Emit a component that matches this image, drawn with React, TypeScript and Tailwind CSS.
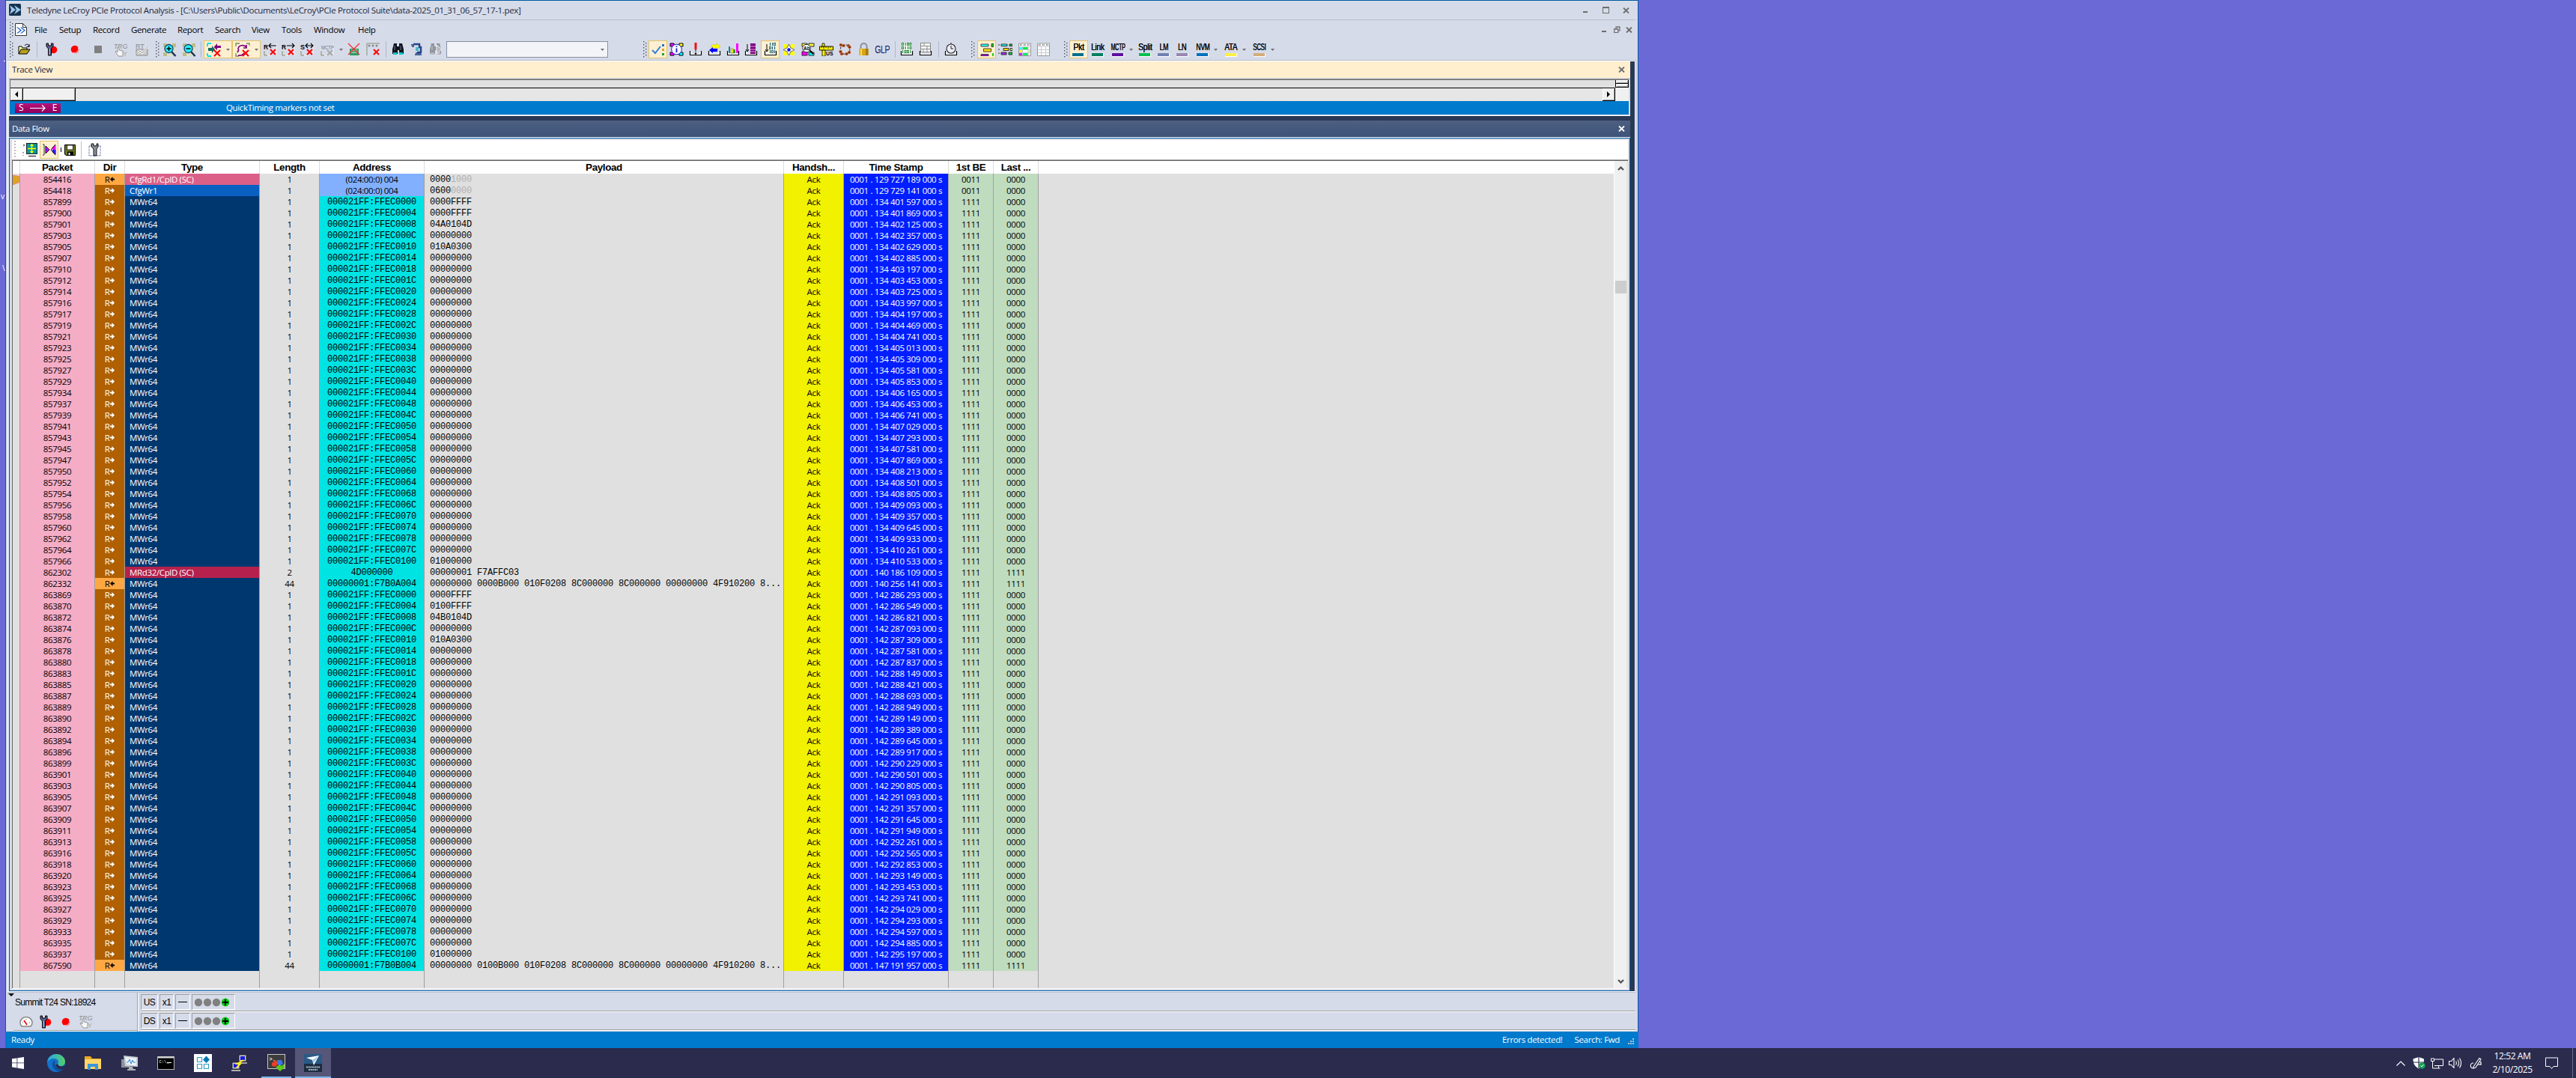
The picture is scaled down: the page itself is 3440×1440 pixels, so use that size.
import React from "react";

/* ---------- data ---------- */

type Row = {
  packet: string;
  back?: boolean;
  type: string;
  typeClass: string;
  length: string;
  address: string;
  payload: string;
  dim?: string;
  time: string;
  first: string;
  last: string;
  cfg?: boolean;
};

const NAVY = "bg-[#00376f]";

const packetsA =
  "899 900 901 903 905 907 910 912 914 916 917 919 921 923 925 927 929 934 937 939 941 943 945 947 950 952 954 956 958 960 962 964 966".split(" ");
const packetsB =
  "869 870 872 874 876 878 880 883 885 887 889 890 892 894 896 899 901 903 905 907 909 911 913 916 918 920 923 925 927 929 933 935 937".split(" ");
const timesA =
  "401 597,401 869,402 125,402 357,402 629,402 885,403 197,403 453,403 725,403 997,404 197,404 469,404 741,405 013,405 309,405 581,405 853,406 165,406 453,406 741,407 029,407 293,407 581,407 869,408 213,408 501,408 805,409 093,409 357,409 645,409 933,410 261,410 533".split(",");
const timesB =
  "286 293,286 549,286 821,287 093,287 309,287 581,287 837,288 149,288 421,288 693,288 949,289 149,289 389,289 645,289 917,290 229,290 501,290 805,291 093,291 357,291 645,291 949,292 261,292 565,292 853,293 149,293 453,293 741,294 029,294 293,294 597,294 885,295 197".split(",");

function block(prefix: string, packets: string[], second: string, times: string[], head: string[]): Row[] {
  return packets.map((p, i) => ({
    packet: prefix + p,
    type: "MWr64",
    typeClass: NAVY,
    length: "1",
    address: "000021FF:FFEC" + (i === 32 ? "0100" : (i * 4).toString(16).toUpperCase().padStart(4, "0")),
    payload: i < head.length ? head[i] : i === 32 ? "01000000" : "00000000",
    time: `0001 . ${second} ${times[i]} 000 s`,
    first: "1111",
    last: "0000",
  }));
}

const rows: Row[] = [
  { packet: "854416", back: true, type: "CfgRd1/CplD (SC)", typeClass: "bg-[#db6088]", length: "1", address: "(024:00:0) 004", payload: "0000", dim: "1000", time: "0001 . 129 727 189 000 s", first: "0011", last: "0000", cfg: true },
  { packet: "854418", type: "CfgWr1", typeClass: "bg-[#0860c0]", length: "1", address: "(024:00:0) 004", payload: "0600", dim: "0000", time: "0001 . 129 729 141 000 s", first: "0011", last: "0000", cfg: true },
  ...block("857", packetsA, "134", timesA, ["0000FFFF", "0000FFFF", "04A0104D", "00000000", "010A0300"]),
  { packet: "862302", type: "MRd32/CplD (SC)", typeClass: "bg-[#b5214c]", length: "2", address: "4D000000", payload: "00000001 F7AFFC03", time: "0001 . 140 186 109 000 s", first: "1111", last: "1111" },
  { packet: "862332", back: true, type: "MWr64", typeClass: NAVY, length: "44", address: "00000001:F7B0A004", payload: "00000000 0000B000 010F0208 8C000000 8C000000 00000000 4F910200 8...", time: "0001 . 140 256 141 000 s", first: "1111", last: "1111" },
  ...block("863", packetsB, "142", timesB, ["0000FFFF", "0100FFFF", "04B0104D", "00000000", "010A0300"]),
  { packet: "867590", back: true, type: "MWr64", typeClass: NAVY, length: "44", address: "00000001:F7B0B004", payload: "00000000 0100B000 010F0208 8C000000 8C000000 00000000 4F910200 8...", time: "0001 . 147 191 957 000 s", first: "1111", last: "1111" },
];

const GRID = "grid grid-cols-[10px_100px_40px_180px_80px_140px_480px_80px_140px_60px_60px_1fr]";

/* ---------- small drawing helpers ---------- */

const Svg = ({ w, h, c = "", children }: { w: number; h: number; c?: string; children: React.ReactNode }) => (
  <svg width={w} height={h} viewBox={`0 0 ${w} ${h}`} className={`shrink-0 block tracking-normal ${c}`}>{children}</svg>
);

const Grip = ({ c = "" }) => (
  <Svg w={5} h={22} c={c}>
    {Array.from({ length: 11 }, (_, i) => (
      <rect key={i} x={i % 2 ? 3 : 0} y={i * 2} width="1.4" height="1.4" fill="#4c5066" />
    ))}
  </Svg>
);
const Sep = ({ c = "" }) => <div className={`h-[22px] w-px shrink-0 bg-[#b3b7c8] ${c}`} />;
const Drop = ({ c = "" }) => (
  <Svg w={5} h={3} c={c}><path d="M0 0h5L2.500 3z" fill="#717171" /></Svg>
);
const Hot = ({ c = "", children }: { c?: string; children: React.ReactNode }) => (
  <div className={`flex h-[24px] shrink-0 items-center justify-center border border-[#e5c365] bg-[#fdf0d2] ${c}`}>{children}</div>
);
const RedX = ({ x, y, s = 7 }: { x: number; y: number; s?: number }) => (
  <path d={`M${x} ${y}l${s} ${s}m0 -${s}l-${s} ${s}`} stroke="#f00" strokeWidth="2" fill="none" />
);

const Wrench = ({ c = "" }) => (
  <Svg w={16} h={18} c={c}>
    <circle cx="10.500" cy="9.500" r="4.800" fill="#f00" />
    <path d="M1 1v4l2.500 3v9h4V8L10 5V1H7.500v3h-4V1z" fill="#5c6494" stroke="#000" strokeWidth="1" />
    <path d="M5 8v8" stroke="#c4cae4" />
  </Svg>
);
const RecordDot = ({ c = "" }) => (
  <Svg w={12} h={12} c={c}><circle cx="6" cy="6" r="5.300" fill="#f00" /><path d="M10.500 3.500a5.500 5.500 0 0 1-7 7" stroke="#fff" fill="none" opacity=".8" /></Svg>
);
const TrgHand = ({ c = "" }) => (
  <Svg w={19} h={19} c={c}>
    <text x="0" y="8" fontSize="9" fontFamily="Liberation Sans" fontStyle="italic" fill="#8c8c8c" textLength="18.500" lengthAdjust="spacingAndGlyphs">TRG</text>
    <text x="12" y="18" fontSize="9" fontFamily="Liberation Sans" fill="#a8a8a8">Y</text>
    <path d="M5 6v7l-2-2-1 1 4 6h6v-7l-5-1V6z" fill="#f6f6f6" stroke="#8c8c8c" strokeWidth=".9" />
  </Svg>
);
const Zoomer = ({ plus, c = "" }: { plus?: boolean; c?: string }) => (
  <Svg w={19} h={19} c={c}>
    <path d="M1 1h17v17H1z" fill="#dbe0c8" />
    <path d="M1 1h5v5H1zM13 1h5v5h-5zM1 13h5v5H1z" fill="#b9be8a" />
    <path d="M12 12l5.500 6" stroke="#1c2f60" strokeWidth="2.500" />
    <circle cx="8.500" cy="8" r="5.500" fill="#28f0f4" stroke="#123a7a" strokeWidth="1.300" />
    <path d={plus ? "M5.500 8h6M8.500 5v6" : "M5.500 8h6"} stroke="#000" strokeWidth="1.400" />
  </Svg>
);
const Letters = ({ t, arrow, gray, c = "" }: { t: string; arrow: string; gray?: boolean; c?: string }) => (
  <Svg w={20} h={18} c={c}>
    <path d="M1 9v8h9M17 1v16" stroke="#f3f4ea" fill="none" />
    <path d="M1 11v6h4" stroke="#7d8264" fill="none" />
    {gray ? (
      <text x="1" y="9" fontSize="8" fontFamily="Liberation Sans" fill="#777" textLength="17" lengthAdjust="spacingAndGlyphs">{t}</text>
    ) : (
      <text x="0" y="9" fontSize="9.500" fontWeight="700" fontFamily="Liberation Sans" textLength="6" lengthAdjust="spacingAndGlyphs">{t}</text>
    )}
    {arrow && <path d={arrow} stroke="#000" fill="none" strokeWidth="1.200" />}
    {gray ? <path d="M9 10l7 7m0-7l-7 7" stroke="#a9a9a9" strokeWidth="2" /> : <RedX x={9} y={9} />}
  </Svg>
);
const Binoc = ({ gray, c = "" }: { gray?: boolean; c?: string }) => (
  <Svg w={18} h={18} c={c}>
    <path d="M3 1h4v4h3V1h4l2 8v6h-6v-5H8v5H1V9z" fill={gray ? "#8f949e" : "#10131c"} />
    <path d="M2 13h5v3H2zM10 13h5v3h-5z" fill={gray ? "#b6bac2" : "#00c8c8"} />
    <path d="M4 4v6M12 4v6" stroke={gray ? "#c4c8d0" : "#6e7690"} />
    {gray && <path d="M10 3l7 6-7 6z" fill="#b5b8bf" stroke="#f5f5f5" />}
  </Svg>
);
const Tray = ({ c = "", children }: { c?: string; children: React.ReactNode }) => (
  <Svg w={18} h={18} c={c}>
    <path d="M1 12h3v3h10v-3h3v5H1z" fill="#fff" />
    <path d="M1.500 11v5.500h15V11" fill="none" stroke="#000" strokeWidth="1.200" />
    {children}
  </Svg>
);

const Label = ({ t, bar, scale, c = "" }: { t: string; bar: string; scale: string; c?: string }) => (
  <div className={`flex h-[22px] shrink-0 flex-col items-center ${c}`}>
    <div className={`flex h-[16px] items-center justify-center whitespace-nowrap font-['Liberation_Sans'] text-[12.500px] leading-[14px] text-black [text-shadow:0.300px_0_0_#000] ${scale}`}>{t}</div>
    <div className={`h-[5px] w-[16px] border-b border-r border-white ${bar}`} />
  </div>
);

const Close = ({ color = "#6d6d6d", c = "" }) => (
  <Svg w={9} h={8} c={c}><path d="M1 .5l7 7M8 .5l-7 7" stroke={color} strokeWidth="1.800" /></Svg>
);

const Bits = ({ x, y, s, color, rowsText }: { x: number; y: number; s: number; color: string; rowsText: string[] }) => (
  <g>
    {rowsText.map((r, j) =>
      r.split("").map((b, i) =>
        b === "1" ? (
          <rect key={`${i}-${j}`} x={x + i * s + 1} y={y + j * 5} width="1.100" height="4" fill={color} />
        ) : (
          <rect key={`${i}-${j}`} x={x + i * s + 0.5} y={y + j * 5 + 0.5} width="2" height="3" fill="none" stroke={color} strokeWidth=".9" />
        )
      )
    )}
  </g>
);

/* ---------- toolbars ---------- */

const MainToolbar = () => (
  <div className="flex h-[28px] shrink-0 items-center">
    <Grip c="ml-[5px]" />
    <Svg w={17} h={16} c="ml-[6px]">
      <path d="M1 14V4h4l1 2h6v3" fill="#ffff9a" stroke="#000" />
      <path d="M1 14l3-6h12l-4 6z" fill="#b9a11c" stroke="#000" />
      <path d="M9 3c2-3 5-2 6 1M15 1v3.500h-3.500" stroke="#000" fill="none" />
    </Svg>
    <Sep c="ml-[8px]" />
    <Wrench c="ml-[11px]" />
    <RecordDot c="ml-[17px]" />
    <div className="ml-[20px] size-[10px] shrink-0 bg-[#808080]" />
    <TrgHand c="ml-[16px]" />
    <Svg w={18} h={18} c="ml-[10px]">
      <text x="0" y="8" fontSize="9" fontFamily="Liberation Sans" fill="#8a8a8a">RT</text>
      <path d="M1 9h15v8H1z" fill="#c9c9c9" stroke="#8d8d8d" />
      <path d="M2 15l4-4 3 3 8-10" stroke="#fff" strokeWidth="2.400" fill="none" />
      <path d="M2 15l4-4 3 3 8-10" stroke="#8d8d8d" fill="none" />
    </Svg>
    <Grip c="ml-[9px]" />
    <Zoomer plus c="ml-[4px]" />
    <Zoomer c="ml-[7px]" />
    <Sep c="ml-[6px]" />
    <Hot c="ml-[3px] w-[38px] gap-[6px] pl-px">
      <Svg w={20} h={19}>
        <path d="M1 1h5M1 1v4M1 18v-4M1 18h5" stroke="#00e5e5" strokeWidth="2" fill="none" />
        <path d="M2 7h5V4l4 5-4 5v-3H2z" fill="#0c6a62" />
        <path d="M19 4h-5V1L9.500 6l4.500 4V7h5z" fill="#800080" />
        <RedX x={10} y={10} s={8} />
      </Svg>
      <Drop />
    </Hot>
    <Hot c="w-[38px] gap-[6px] pl-px">
      <Svg w={20} h={19}>
        <path d="M1 5V1h5M15 1h4v3M1 14v4h4" stroke="#7d8264" strokeWidth="1.300" fill="none" />
        <path d="M4 9c0-6 8-7 11-3M15 3v4h-4M5 9l-2 4M4 17c5 1 8-3 8-3" stroke="#800080" strokeWidth="1.700" fill="none" />
        <RedX x={10} y={10} s={8} />
      </Svg>
      <Drop />
    </Hot>
    <Letters t="R" arrow="M7 4h10M10 1L7 4l3 3" c="ml-[4px]" />
    <Letters t="R" arrow="M7 4h10M14 1l3 3-3 3" c="ml-[4px]" />
    <Letters t="S" arrow="M7 4h10M10 1L7 4l3 3M14 1l3 3-3 3" c="ml-[5px]" />
    <Letters t="MCTP" arrow="" gray c="ml-[7px]" />
    <Drop c="ml-[5px]" />
    <Svg w={17} h={18} c="ml-[6px]">
      <path d="M3 8h12v9H3z" fill="#2d9c66" />
      <path d="M5 10h8M5 13h8" stroke="#d7efe0" />
      <path d="M1 1l15 15M16 1L1 16" stroke="#e33" strokeWidth="1.400" />
    </Svg>
    <Svg w={19} h={18} c="ml-[8px]">
      <path d="M1 17V1h17" stroke="#8b9074" fill="none" />
      <circle cx="4" cy="4" r="1.500" fill="#888" /><circle cx="9" cy="4" r="1.500" fill="#888" /><circle cx="14" cy="4" r="1.500" fill="#888" />
      <RedX x={10} y={9} />
    </Svg>
    <Sep c="ml-[7px]" />
    <Binoc c="ml-[7px]" />
    <Svg w={15} h={18} c="ml-[8px]">
      <path d="M3 2h8v4h2v7H8" stroke="#26458c" strokeWidth="2.500" fill="none" />
      <path d="M6 6h4v5H6z" fill="#4fb8c8" />
      <path d="M0 3h4M1 5h3M6 14h7M5 16h9" stroke="#1d3c80" strokeWidth="1.500" />
    </Svg>
    <Binoc gray c="ml-[9px]" />
    <div className="ml-[5px] flex h-[22px] w-[216px] shrink-0 items-center justify-end border border-[#8591a2] bg-[#f2f4f8] pr-[4px]">
      <Drop />
    </div>
    <Grip c="ml-[47px]" />
    <Hot c="ml-[2px] w-[25px]">
      <Svg w={18} h={18}>
        <path d="M1 10l4 4 7-9" stroke="#2f7ed8" strokeWidth="2" fill="none" />
        <path d="M14 2h3v3h-3z" fill="#2f6fc0" /><path d="M14 8h3v3h-3z" fill="#e39a1f" /><path d="M14 14h3v3h-3z" fill="#2b9a3a" />
      </Svg>
    </Hot>
    <Svg w={19} h={18} c="ml-[3px]">
      <path d="M1 1h5v4H1z" fill="#f0f" stroke="#000" /><path d="M13 1h5v4h-5z" fill="#ff0" stroke="#000" />
      <path d="M1 13h5v4H1z" fill="#f0f" stroke="#000" /><path d="M13 13h5v4h-5z" fill="#0ff" stroke="#000" />
      <circle cx="9.500" cy="9" r="6.800" fill="#fff" stroke="#1616c8" />
      <path d="M9.500 7.500V13M9.500 4.500v1.500" stroke="#1616c8" strokeWidth="1.800" />
    </Svg>
    <Tray c="ml-[7px]"><path d="M9 0v9" stroke="#e11" strokeWidth="3" /><path d="M9 9v3" stroke="#777" strokeWidth="2" /><circle cx="9" cy="14.500" r="1.200" /></Tray>
    <Tray c="ml-[7px]">
      <path d="M17 5L12 1v2H5v4h7v2z" fill="#ff0" stroke="#b8b800" strokeWidth=".5" />
      <path d="M2 10l5-4v2h6v4H7v2z" fill="#00f" />
    </Tray>
    <Tray c="ml-[7px]">
      <path d="M3 5h2v9H3z" fill="#0a8c8c" /><path d="M6 8h3v6H6z" fill="#ff0" stroke="#555" strokeWidth=".5" /><path d="M9.500 9h2v5h-2z" fill="#008000" /><path d="M13 1h3v13h-3z" fill="#f0f" />
    </Tray>
    <Tray c="ml-[6px]">
      <path d="M4 2v10M2 9l2 3 2-3" stroke="#000" fill="none" /><path d="M8 1h7v14H8z" fill="#800080" /><path d="M8 5h7M8 9h7M8 12h7" stroke="#d9a8d9" />
    </Tray>
    <Hot c="ml-[4px] w-[25px]">
      <Tray><path d="M4 2v10M2 9l2 3 2-3" stroke="#000" fill="none" /><Bits x={7} y={0} s={3} color="#106080" rowsText={["110", "011", "101"]} /></Tray>
    </Hot>
    <Svg w={17} h={17} c="ml-[4px]">
      <path d="M1 1h4l3.500 4L12 1h4v4l-3 3.500 3 3.500v4h-4l-3.500-3L5 16H1v-4l3-3.500L1 5z" fill="#ff0" />
      <path d="M8.500 1l2.500 5 5 2.500-5 2.500-2.500 5-2.500-5-5-2.500L6 6z" fill="#fff" stroke="#555" strokeWidth=".9" />
      <circle cx="8.500" cy="8.500" r="2.200" fill="#00f" />
    </Svg>
    <Svg w={18} h={18} c="ml-[8px]">
      <path d="M1 1h7v4H1zM10 1h7v4h-7z" fill="#f7f74a" stroke="#000" strokeWidth=".8" />
      <path d="M1 12h7v5H1z" fill="#f0f" stroke="#000" strokeWidth=".8" /><path d="M10 13h7v4h-7z" fill="#0ff" stroke="#000" strokeWidth=".8" />
      <path d="M10 9l6 6" stroke="#000" strokeWidth="2" />
      <circle cx="7" cy="7.500" r="5.200" fill="#fff" stroke="#333" />
      <text x="3" y="10" fontSize="6.500" fontWeight="700" fontFamily="Liberation Sans">Ab</text>
    </Svg>
    <Svg w={19} h={18} c="ml-[6px]">
      <path d="M.5 5h18v5H.5z" fill="#fff200" stroke="#000" strokeWidth=".9" /><path d="M3 5v2M6 5v3M9 5v2M12 5v3M15 5v2" stroke="#000" strokeWidth=".8" />
      <path d="M4 1h3v4H4zM4 10h4v8H4z" fill="#fff200" stroke="#000" strokeWidth=".8" />
      <text x="9" y="17" fontSize="8" fontWeight="700" fontFamily="Liberation Sans" textLength="9.500" lengthAdjust="spacingAndGlyphs">US</text>
    </Svg>
    <Svg w={17} h={18} c="ml-[7px]">
      <circle cx="8.500" cy="9" r="6.300" fill="none" stroke="#333" strokeWidth="1.100" strokeDasharray="3 2" />
      {[[3, 3], [6.5, 4], [13, 4], [14.5, 6], [14, 13], [10.5, 15], [4, 15], [2.5, 12]].map(([x, y], i) => (
        <ellipse key={i} cx={x} cy={y} rx="2.200" ry="1.900" fill="#8a2c10" stroke="#f2b27a" strokeWidth=".5" />
      ))}
    </Svg>
    <Svg w={13} h={18} c="ml-[10px]">
      <path d="M2.500 9V5a4 4 0 0 1 8 0v4" fill="none" stroke="#8a8f98" strokeWidth="2" />
      <path d="M.5 8h12v9H.5z" fill="#d9a514" /><path d="M9 8h3.500v9H9z" fill="#a87c08" /><path d="M2 8h2v9H2z" fill="#f7d86a" />
    </Svg>
    <div className="ml-[8px] flex w-[21px] shrink-0 justify-center font-['Liberation_Sans'] text-[14px] leading-[16px] tracking-[-0.500px] text-[#15155c]">
      <span className="scale-x-[0.76]">GLP</span>
    </div>
    <Sep c="ml-[6px]" />
    <Tray c="ml-[6px]"><rect x="2" y="0" width="14" height="14" fill="#fff" /><Bits x={2} y={0} s={3.5} color="#0a7a1c" rowsText={["0100", "0110", "1001"]} /></Tray>
    <Tray c="ml-[7px]">
      <rect x="2.500" y=".5" width="13" height="12" fill="#fff" stroke="#888" />
      <path d="M2.500 4.500h13M2.500 8.500h13M7 .5v4M11 4.500v4M6 8.500v4M11 8.500v4" stroke="#888" />
    </Tray>
    <Sep c="ml-[8px]" />
    <Tray c="ml-[7px]"><circle cx="9" cy="8" r="6" fill="#e9ecf4" stroke="#333" strokeWidth="1.200" /><path d="M9 4v4h3M9 0v2" stroke="#222" fill="none" /></Tray>
    <Grip c="ml-[18px]" />
    <Hot c="ml-[3px] w-[25px]">
      <Svg w={18} h={18}>
        <path d="M1 2h10v3H1z" fill="#2ff" stroke="#444" /><path d="M15 1.500h3v4h-3z" fill="#0c0" stroke="#444" />
        <path d="M4.500 8h10v4h-10z" fill="#ffd600" stroke="#444" /><path d="M1 15.500h10V18H1z" fill="#90c" stroke="#444" /><path d="M16 14h2v4h-2z" fill="#2c2" />
      </Svg>
    </Hot>
    <Svg w={19} h={18} c="ml-[3px]">
      <path d="M4 2h8v2.500H4z" fill="#2ff" stroke="#333" /><path d="M15 2h4v2.500h-4z" fill="#0c0" stroke="#333" />
      <path d="M7 7.500h7v3H7z" fill="#ffd600" stroke="#333" /><path d="M16 7.500h3v3h-3z" fill="#d8ee5a" stroke="#333" />
      <path d="M4 13h7v3H4z" fill="#a2e" stroke="#333" /><path d="M14 13h5v3h-5z" fill="#0c3" stroke="#333" /><path d="M1 2v2M1 8v2M1 13v2" stroke="#333" />
    </Svg>
    <Svg w={17} h={18} c="ml-[8px]">
      <path d="M.5 1h16v16.500H.5z" fill="#fff" stroke="#999" /><path d="M2 3h3M7 3h3M12 3h3" stroke="#222" strokeDasharray="1.500 .8" />
      <path d="M1 6h4v3H1z" fill="#2ff" /><path d="M6 6h7v3H6z" fill="#0e4" /><path d="M1 10h4v3H1z" fill="#fe3" /><path d="M13 10h3v3h-3z" fill="#def0a0" /><path d="M1 14h4v3H1z" fill="#c2f" /><path d="M6 14h7v3H6z" fill="#1e6" />
      <path d="M1 5h15M1 9.500h15M1 13.500h15M5.500 5v12M13 5v12" stroke="#c5c8d4" />
    </Svg>
    <Svg w={17} h={18} c="ml-[8px]">
      <path d="M.5 1h16v16.500H.5z" fill="#fff" stroke="#999" /><path d="M2 3h3M7 3h3M12 3h3" stroke="#222" strokeDasharray="1.500 .8" />
      <path d="M1 5h15M1 9.500h15M1 13.500h15M5.500 5v12M11.500 5v12" stroke="#c5c8d4" />
    </Svg>
    <Grip c="ml-[19px]" />
    <Hot c="ml-[2px] w-[25px]"><Label t="Pkt" bar="bg-[#00708c]" scale="scale-x-[0.85]" /></Hot>
    <Label t="Link" bar="bg-[#008060]" scale="scale-x-[0.82]" c="ml-px w-[24px]" />
    <Label t="MCTP" bar="bg-[#6010a0]" scale="scale-x-[0.56]" c="ml-[2px] w-[26px]" />
    <Drop c="ml-[2px]" />
    <Label t="Split" bar="bg-[#00c050]" scale="scale-x-[0.82]" c="ml-[4px] w-[24px]" />
    <Label t="LM" bar="bg-[#7080b0]" scale="scale-x-[0.7]" c="ml-[2px] w-[22px]" />
    <Label t="LN" bar="bg-[#9888b0]" scale="scale-x-[0.74]" c="ml-[3px] w-[22px]" />
    <Label t="NVM" bar="bg-[#0070c0]" scale="scale-x-[0.68]" c="ml-[4px] w-[24px]" />
    <Drop c="ml-[3px]" />
    <Label t="ATA" bar="bg-[#fff040]" scale="scale-x-[0.8]" c="ml-[6px] w-[24px]" />
    <Drop c="ml-[3px]" />
    <Label t="SCSI" bar="bg-[#d2ac78]" scale="scale-x-[0.62]" c="ml-[5px] w-[26px]" />
    <Drop c="ml-[2px]" />
  </div>
);

/* ---------- data flow grid ---------- */

const HEAD = ["", "Packet", "Dir", "Type", "Length", "Address", "Payload", "Handsh...", "Time Stamp", "1st BE", "Last ..."];

const GridHeader = () => (
  <div className={`${GRID} h-[17px] bg-white font-['Liberation_Sans'] text-[13.400px] font-bold leading-[17px] text-black`}>
    {HEAD.map((h, i) => (
      <div key={i} className="overflow-hidden whitespace-nowrap border-r border-[#dcdcdc] text-center">{h}</div>
    ))}
    <div />
  </div>
);

const DirArrow = ({ back }: { back?: boolean }) => (
  <Svg w={6} h={7}>
    <path d={back ? "M3.500 0v2.500H6v2H3.500V7L0 3.500z" : "M2.500 0v2.500H0v2h2.500V7L6 3.500z"} fill={back ? "#000" : "#fff"} />
  </Svg>
);

const cell = "border-r border-[#a0a0a0] whitespace-nowrap overflow-hidden";

const GridRow = ({ r, first }: { r: Row; first: boolean }) => (
  <div className={`${GRID} h-[15px] leading-[15px]`}>
    <div className={cell}>
      {first && (
        <Svg w={9} h={15}><path d="M0 2l6 1 3 .5v8L5 13l-4 1.500H0z" fill="#dba520" stroke="#ee8078" strokeWidth="1" /></Svg>
      )}
    </div>
    <div className={`${cell} bg-[#f5adc6] text-center`}>{r.packet}</div>
    <div className={`${cell} flex items-center justify-center gap-px ${r.back ? "bg-[#ffa843] text-black" : "bg-[#b06000] text-white"}`}>
      <span>R</span>
      <DirArrow back={r.back} />
    </div>
    <div className={`${cell} pl-[6px] text-white ${r.typeClass}`}>{r.type}</div>
    <div className={`${cell} text-center`}>{r.length}</div>
    <div className={`${cell} text-center ${r.cfg ? "bg-[#82b0ff]" : "bg-[#00e3e3] font-['Liberation_Mono'] text-[12px] leading-[17px] tracking-[-0.200px]"}`}>{r.address}</div>
    <div className={`${cell} whitespace-pre pl-[7px] font-['Liberation_Mono'] text-[12px] leading-[17px] tracking-[-0.200px]`}>
      {r.payload}
      {r.dim && <span className="text-[#b0b0b0]">{r.dim}</span>}
    </div>
    <div className={`${cell} bg-[#f2f200] text-center`}>Ack</div>
    <div className={`${cell} bg-[#001eff] text-center text-white`}>{r.time}</div>
    <div className={`${cell} bg-[#bfdcbf] text-center`}>{r.first}</div>
    <div className={`${cell} bg-[#bfdcbf] text-center`}>{r.last}</div>
    <div />
  </div>
);

const DataFlow = () => (
  <div className="flex h-[1163px] flex-col">
    <div className="flex h-[22px] shrink-0 items-center justify-between bg-linear-to-b from-[#4d6082] to-[#3d5277] pl-[4px] pr-[7px] text-white">
      <span>Data Flow</span>
      <Close color="#fff" />
    </div>
    <div className="h-px bg-white" />
    <div className="flex min-h-0 flex-1 flex-col border border-[#005a9e] bg-[#d6dbe9] pb-[2px] pl-[3px] pr-[2px] pt-[2px]">
      <div className="flex h-[26px] shrink-0 items-center bg-white">
        <Svg w={3} h={24} c="ml-[3px]">
          {[0, 4, 8, 12, 16, 20].map((y) => <rect key={y} y={y} width="2" height="2" fill="#bdbdbd" />)}
        </Svg>
        <Svg w={20} h={18} c="ml-[8px]">
          <path d="M1 2l2 1-2 1M1 12v2M1 16v1" stroke="#555" fill="none" />
          <rect x="5.500" y=".5" width="14" height="14" fill="#009a9a" stroke="#222" /><path d="M8 17.500h10" stroke="#000" />
          <path d="M12.500 2v11M7 7.500h11M10.500 4l2-2 2 2M10.500 11l2 2 2-2" stroke="#ff0" strokeWidth="1.300" fill="none" />
        </Svg>
        <Hot c="ml-[3px] w-[25px]">
          <Svg w={19} h={16}>
            <path d="M1 1h2v14H1" stroke="#333" fill="none" />
            <path d="M5 3v10l5-5z" fill="#f0f" stroke="#000" /><path d="M5 6.500v3.500l3-2z" fill="#22f" />
            <path d="M18.500 1.500v13L14 11V5z" fill="#f0f" /><path d="M18.500 8v6.500L14 11V8z" fill="#22f" />
            <path d="M18 1l-6 7 6 7" stroke="#000" fill="none" />
          </Svg>
        </Hot>
        <div className="ml-[3px] h-[6px] w-px bg-black" />
        <Svg w={15} h={15} c="ml-[4px]">
          <path d="M.5.5h14v14H2l-1.500-1.500z" fill="#6e7a1c" stroke="#000" /><path d="M3.500 1h8v6h-8z" fill="#fff" stroke="#000" strokeWidth=".8" /><path d="M4 9.500h8v5H4z" fill="#000" /><path d="M5.500 11h2v3h-2z" fill="#fff" />
        </Svg>
        <div className="ml-[7px] h-[23px] w-px bg-[#bcc0cc]" />
        <Svg w={17} h={18} c="ml-[9px]">
          <path d="M1 4h15M1 4v13h15V4" stroke="#223a90" strokeDasharray="1 1" fill="none" />
          <path d="M4 1v4l3 3v9h4V8l2-3V1h-2v3H7V1z" fill="#8d919c" stroke="#000" strokeWidth=".9" />
        </Svg>
      </div>
      <div className="flex min-h-0 flex-1 flex-col border-b border-white border-t border-t-[#a0a0a0]">
        <div className="flex min-h-0 flex-1 border-l border-t border-[#696969] bg-[#e0e0e0]">
          <div className="flex min-w-0 flex-1 flex-col">
            <GridHeader />
            {rows.map((r, i) => <GridRow key={r.packet} r={r} first={i === 0} />)}
            <div className={`${GRID} min-h-0 flex-1`}>
              {HEAD.map((_, i) => <div key={i} className={cell} />)}
              <div />
            </div>
          </div>
          <div className="flex w-[17px] shrink-0 flex-col items-center border-l border-white bg-[#f0f0f0]">
            <Svg w={9} h={6} c="mt-[7px]"><path d="M1 5l3.500-3.500L8 5" stroke="#505050" strokeWidth="2.200" fill="none" /></Svg>
            <div className="mt-[147px] h-[17px] w-[15px] bg-[#cdcdcd]" />
            <div className="flex-1" />
            <Svg w={9} h={6} c="mb-[6px]"><path d="M1 1l3.500 3.500L8 1" stroke="#505050" strokeWidth="2.200" fill="none" /></Svg>
          </div>
          <div className="w-[2px] bg-[#e4e4e4]" />
        </div>
      </div>
    </div>
  </div>
);

/* ---------- trace view ---------- */

const bevel = "border-b border-r border-black bg-[#f0f0f0] shadow-[inset_1px_1px_0_#fff,inset_-1px_-1px_0_#a0a0a0]";

const TraceView = () => (
  <div className="flex h-[73px] flex-col border-b border-white bg-[#d6dbe9]">
    <div className="flex h-[22px] items-center justify-between bg-[#ffefcf] pl-[4px] pr-[7px] text-[#1b293e]">
      <span>Trace View</span>
      <Close />
    </div>
    <div className="mt-px flex flex-1 flex-col border-t border-[#a0a0a0] pr-[2px] pl-px pb-px">
      <div className="flex h-[29px] flex-col border-l border-t border-[#696969]">
        <div className="flex h-[10px]">
          <div className="flex-1 bg-[#e0e0e0]" />
          <div className="flex w-[18px] flex-col border-l border-black">
            <div className={`h-[5px] ${bevel}`} />
            <div className={`h-[5px] ${bevel}`} />
          </div>
        </div>
        <div className="flex flex-1">
          <div className="flex flex-1 border-t border-black bg-[#e4e4e4] bg-[repeating-conic-gradient(#d2d2d2_0_25%,#fafafa_0_50%)] bg-[length:2px_2px]">
            <div className={`flex w-[17px] items-center justify-center ${bevel}`}><Svg w={4} h={8}><path d="M4 0v8L0 4z" /></Svg></div>
            <div className={`w-[70px] ${bevel}`} />
            <div className="flex-1" />
            <div className={`flex w-[17px] items-center justify-center ${bevel}`}><Svg w={4} h={8}><path d="M0 0v8l4-4z" /></Svg></div>
          </div>
          <div className="w-[18px] bg-[#f0f0f0]" />
        </div>
      </div>
      <div className="flex flex-1 items-center bg-[#007acc] text-white">
        <div className="ml-[7px] flex h-[13px] w-[61px] items-center justify-between bg-linear-to-b from-[#b8127c] to-[#8c0058] px-[5px]">
          <span className="text-[12px]">S</span>
          <Svg w={21} h={9}><path d="M0 4.500h20M16 .5l4 4-4 4" stroke="#fff" fill="none" strokeWidth="1.200" /></Svg>
          <span className="text-[12px]">E</span>
        </div>
        <span className="ml-[221px]">QuickTiming markers not set</span>
      </div>
    </div>
  </div>
);

/* ---------- recorder strip ---------- */

const sunken = "flex h-[21px] items-center justify-center border border-b-white border-l-[#a0a0a0] border-r-white border-t-[#a0a0a0]";

const Lane = ({ name }: { name: string }) => (
  <div className="flex h-[25px] items-center gap-[2px] border-b border-[#a0a0a0] pt-px shadow-[0_1px_0_#fff]">
    <div className={`${sunken} w-[23px]`}>{name}</div>
    <div className={`${sunken} w-[19px]`}>x1</div>
    <div className={`${sunken} w-[20px]`}><div className="h-px w-[12px] bg-black" /></div>
    <div className={`${sunken} w-[58px] !justify-start pl-[3px]`}>
      <Svg w={50} h={12}>
        {[5, 17, 29].map((x) => <circle key={x} cx={x} cy="6" r="5.200" fill="#808080" />)}
        <circle cx="41" cy="6" r="5.400" fill="#0c1" />
        <path d="M37 6h8M41 2v8" stroke="#000" strokeWidth="2" />
      </Svg>
    </div>
  </div>
);

const Recorder = () => (
  <div className="flex h-[52px] shrink-0 text-black">
    <div className="flex w-[176px] flex-col border-r border-[#a0a0a0] shadow-[1px_0_0_#fff]">
      <Svg w={8} h={4} c="ml-[3px] mt-px"><path d="M0 0h8L4 4z" /></Svg>
      <div className="ml-[12px] -mt-px h-[18px] whitespace-nowrap font-['Liberation_Sans'] text-[12px] leading-[18px] tracking-[-0.720px]">Summit T24 SN:18924</div>
      <div className="flex flex-1 items-center pl-[18px] pt-[5px]">
        <Svg w={18} h={14}>
          <path d="M3 13a8 7.500 0 1 1 12 0z" fill="#fff" stroke="#888" strokeWidth="1.500" /><path d="M6 5l4 6" stroke="#d00" strokeWidth="1.600" />
          <path d="M4 8h1M9 3v1M13 8h1" stroke="#555" />
        </Svg>
        <Wrench c="ml-[9px]" />
        <RecordDot c="ml-[13px]" />
        <TrgHand c="ml-[11px]" />
      </div>
      <div className="ml-[10px] h-[2px] border-t border-[#a0a0a0] bg-white" />
    </div>
    <div className="ml-[4px] mr-[3px] flex flex-1 flex-col font-['Liberation_Sans'] text-[12px] tracking-[-0.500px]">
      <Lane name="US" />
      <Lane name="DS" />
    </div>
  </div>
);

/* ---------- main window ---------- */

const MENU: [string, string][] = [
  ["File", "w-[33px]"], ["Setup", "w-[45px]"], ["Record", "w-[51px]"], ["Generate", "w-[62px]"], ["Report", "w-[50px]"],
  ["Search", "w-[49px]"], ["View", "w-[40px]"], ["Tools", "w-[43px]"], ["Window", "w-[59px]"], ["Help", "w-[40px]"],
];

const ArrowLogo = ({ doc }: { doc?: boolean }) => (
  <Svg w={16} h={17}>
    {doc ? (
      <>
        <path d="M.5.5h10l5 5v11H.5z" fill="#fff" stroke="#333" /><path d="M10.500.5v5h5" fill="none" stroke="#333" />
        <path d="M2 5.500l5 4-5 4 2 0 5-4-5-4zM7 5.500l5 4-5 4 2 0 5-4-5-4z" fill="#1c64c8" />
      </>
    ) : (
      <>
        <rect width="16" height="16" rx="1.500" fill="#16324e" />
        <path d="M1 2l8 6-8 6 2-6zM7 2l9 6-9 6 3-6z" fill="#9cc8f0" />
      </>
    )}
  </Svg>
);

const AppWindow = () => (
  <div className="absolute left-[7px] top-0 flex h-[1400px] w-[2181px] flex-col border-x border-t border-[#005a9e] bg-[#d6dbe9] font-['Open_Sans',sans-serif] text-[11.500px] tracking-[-0.350px] text-black">
    <div className="mr-[3px] flex h-[26px] shrink-0 items-center border-b border-[#b9bdce] pl-[4px]">
      <ArrowLogo />
      <span className="ml-[8px] whitespace-nowrap tracking-[-0.345px] text-[#1b293e]">
        Teledyne LeCroy PCIe Protocol Analysis - [C:\Users\Public\Documents\LeCroy\PCIe Protocol Suite\data-2025_01_31_06_57_17-1.pex]
      </span>
      <div className="flex-1" />
      <div className="mt-[5px] h-[2px] w-[6px] bg-[#6d6d6d]" />
      <div className="ml-[20px] h-[9px] w-[9px] border border-t-2 border-[#6d6d6d]" />
      <Close c="ml-[18px] mr-[8px]" />
    </div>
    <div className="flex h-[25px] shrink-0 items-center">
      <Grip c="ml-[5px]" />
      <div className="ml-[2px] mr-[7px]"><ArrowLogo doc /></div>
      {MENU.map(([m, w]) => <div key={m} className={`${w} shrink-0 pl-[3px]`}>{m}</div>)}
      <div className="flex-1" />
      <div className="mt-[5px] h-[2px] w-[6px] bg-[#6d6d6d]" />
      <Svg w={9} h={9} c="ml-[10px]"><path d="M.7 3.500h5v5h-5zM.7 4h5M3 3V.8h5v5H6M3 1.200h5" fill="none" stroke="#6d6d6d" strokeWidth="1.200" /></Svg>
      <Close c="ml-[7px] mr-[7px]" />
    </div>
    <MainToolbar />
    <div className="ml-[2px] mr-[2px] flex h-[1246px] shrink-0 flex-col border-b border-r border-t border-[#b9bdce]">
      <div className="flex flex-1 border-b border-l border-r border-t border-white pl-px">
        <div className="flex flex-1 flex-col bg-[#293955]">
          <TraceView />
          <div className="h-[6px]" />
          <DataFlow />
        </div>
        <div className="w-[6px] bg-[#293955]" />
      </div>
    </div>
    <Recorder />
    <div className="-mx-px flex flex-1 items-center bg-[#007acc] pl-[8px] pr-[5px] text-white">
      <span>Ready</span>
      <div className="flex-1" />
      <span>Errors detected!</span>
      <span className="ml-[16px]">Search: Fwd</span>
      <Svg w={9} h={9} c="ml-[11px] mt-[4px]">
        {[[6, 0], [3, 3], [6, 3], [0, 6], [3, 6], [6, 6]].map(([x, y]) => <rect key={`${x}${y}`} x={x} y={y} width="2" height="2" fill="#b8c4cc" />)}
      </Svg>
    </div>
  </div>
);

/* ---------- taskbar ---------- */

const slot = "flex h-full w-[48px] items-center justify-center";

const Taskbar = () => (
  <div className="absolute inset-x-0 bottom-0 flex h-[40px] items-center bg-[#2b2b4e] font-['Open_Sans',sans-serif] text-[12px] tracking-[-0.400px] text-white">
    <div className={slot}>
      <Svg w={16} h={16}><path d="M0 2.300L6.500 1.400v6.100H0zM7.300 1.300L16 0v7.500H7.300zM0 8.300h6.500v6.200L0 13.600zM7.300 8.300H16V16l-8.700-1.300z" fill="#fff" /></Svg>
    </div>
    <div className={`${slot} ml-[3px]`}>
      <Svg w={24} h={24}>
        <defs>
          <linearGradient id="edgeTop" x1="0" x2="1"><stop offset="0" stopColor="#2aa5e8" /><stop offset="1" stopColor="#52cf6a" /></linearGradient>
        </defs>
        <circle cx="12" cy="12" r="12" fill="#1470c8" />
        <path d="M0 11C1 4 6 0 12 0c7 0 12 5 12 10 0 4-3 6-6 6-3 0-4-1.500-4-2.500 0-1 1-1.500 1-3C15 8 12.500 6 9 6 5 6 1.500 8 0 11z" fill="url(#edgeTop)" />
        <path d="M9 9c-4 4-2 12 6 14 3 0 6-2 8-5-6 3-13 0-13-6 0-1 .5-2.500 1-3z" fill="#0f4f9c" />
        <path d="M14.500 13c-.5 2.500 2.500 4 6 3.500l3-1.500v2l-2 3c-6 1-10-2-10-6z" fill="#2b2b4e" />
      </Svg>
    </div>
    <div className={`${slot} ml-px`}>
      <Svg w={22} h={20}><path d="M0 1h8l2 3h12v14H0z" fill="#e8a820" /><path d="M0 5h22v13H0z" fill="#ffd668" /><path d="M4 19v-8h14v8h-4v-4H8v4z" fill="#3a96dc" /></Svg>
    </div>
    <div className={`${slot} ml-px`}>
      <Svg w={24} h={22}>
        <path d="M1 6h12v11H1z" fill="#8b9298" /><path d="M4 1l19 2v13L6 15z" fill="#c8ced2" /><path d="M6 3l15 1.500v10L8 13z" fill="#e8f2fa" />
        <path d="M8 10h2l2-4 2 6 2-5 1 3h3" stroke="#3a88c8" fill="none" /><path d="M11 16h5l1 3h3v2H9v-2h2z" fill="#aab0b4" />
      </Svg>
    </div>
    <div className={slot}>
      <Svg w={23} h={18}>
        <rect x=".5" y=".5" width="22" height="17" fill="#000" stroke="#b8b8b8" /><path d="M1 1.500h21" stroke="#dcdcdc" strokeWidth="2" />
        <text x="2.500" y="8.500" fontSize="5.500" fontFamily="Liberation Mono" fill="#fff">C:\_</text><path d="M13 8.500h6" stroke="#fff" />
      </Svg>
    </div>
    <div className={`${slot} ml-[2px]`}>
      <Svg w={24} h={24}>
        <rect width="24" height="24" fill="#fff" /><path d="M4.500 4.500h6v6h-6zM4.500 13.500h6v6h-6zM13.500 13.500h6v6h-6z" fill="none" stroke="#3aa0c4" strokeWidth="1.200" /><path d="M16.500 2.500L21 7.500l-4.500 4.500L12 7.500z" fill="#0078b4" />
      </Svg>
    </div>
    <div className={`${slot} ml-px`}>
      <Svg w={24} h={24}>
        <path d="M11 1h10v9H11z" fill="#d0d0d0" stroke="#222" /><path d="M13 3h6v5h-6z" fill="#1a1ae0" /><path d="M10 11h12v2H10z" fill="#a0a0a0" />
        <path d="M2 11h10v9H2z" fill="#d0d0d0" stroke="#222" /><path d="M4 13h6v5H4z" fill="#1a1ae0" /><path d="M1 21h12v2H1z" fill="#b0b0b0" />
        <path d="M17 8l-8 5h4l-5 5" stroke="#ffee20" strokeWidth="2" fill="none" />
      </Svg>
    </div>
    <div className="ml-[5px] flex h-full w-[40px] flex-col items-center justify-between pt-[8px]">
      <Svg w={25} h={24}>
        <rect x=".5" y=".5" width="23" height="19" fill="#3c3c3c" stroke="#c8c8c8" /><text x="2.500" y="9" fontSize="7" fontWeight="700" fontFamily="Liberation Mono" fill="#eee">&gt;.</text>
        <path d="M6 12l5-4 4 4-4 5-5-1z" fill="#e8402c" /><path d="M13 8l6 0 2 5-4 3-4-3z" fill="#3a78e8" /><path d="M12 17l4-3 3 2 4-3v5l-6 5-5-4z" fill="#5cc820" />
      </Svg>
      <div className="h-[2px] w-full bg-[#76b9ed]" />
    </div>
    <div className="ml-[5px] flex h-full w-[48px] flex-col items-center justify-between bg-[#565678] pt-[8px]">
      <Svg w={24} h={24}>
        <rect width="24" height="24" fill="#1c2c40" /><rect width="24" height="13" fill="#2a5a86" /><path d="M3 5l17-3-7 13-2-7z" fill="#fff" /><path d="M11 8l8-5-6 9z" fill="#a8c8e4" />
        <path d="M3 17.500h18M6 21h12" stroke="#aeb8c4" strokeWidth="1.800" strokeDasharray="2 .7" />
      </Svg>
      <div className="h-[2px] w-full bg-[#76b9ed]" />
    </div>
    <div className="flex-1" />
    <Svg w={12} h={7}><path d="M.5 6.500L6 1l5.500 5.500" stroke="#fff" fill="none" strokeWidth="1.200" /></Svg>
    <Svg w={17} h={16} c="ml-[10px]">
      <path d="M8 0l7 2.500c0 6-1 9.500-7 13C2 12 0.500 8.500 .5 2.500z" fill="#fff" /><path d="M8 0v15M.5 7h14.500" stroke="#2b2b4e" strokeWidth="1.200" />
      <circle cx="12.500" cy="11.500" r="4.300" fill="#10a050" /><path d="M10.500 11.500l1.500 1.500 2.500-3" stroke="#fff" fill="none" />
    </Svg>
    <Svg w={17} h={15} c="ml-[7px]"><path d="M4.500 2h12v8.500H5M2.500 5v9h10M10.500 11v3M.5 1h4v3.500h-4z" stroke="#fff" fill="none" /></Svg>
    <Svg w={17} h={14} c="ml-[7px]"><path d="M.5 4.500h3l3.500-4v13l-3.500-4h-3zM9.500 4.500c1 1.500 1 3.500 0 5M12 2.500c2 2.500 2 6.500 0 9M14.500.5c2.500 4 2.500 9 0 13" stroke="#fff" fill="none" strokeWidth="1.100" /></Svg>
    <Svg w={17} h={17} c="ml-[11px]"><path d="M5 13L13 1.500l2 1.500-7 11-3 1zM5 8c-5 0-5 7 0 7M10 10h6M13 6c3 0 3 3 0 4" stroke="#fff" fill="none" strokeWidth="1.100" /></Svg>
    <div className="ml-[12px] flex w-[56px] flex-col items-center leading-[18px]">
      <div>12:52 AM</div>
      <div>2/10/2025</div>
    </div>
    <Svg w={17} h={17} c="ml-[16px]"><path d="M.5 1h16v11.500h-5.500L8.500 15.500 6 12.500H.5z" stroke="#fff" fill="none" /></Svg>
    <div className="ml-[19px] mr-[4px] h-full w-px bg-[#6c6c8c]" />
  </div>
);

export default function App() {
  return (
    <div className="relative h-[1440px] w-[3440px] overflow-hidden bg-[#6b69d6]">
      <div className="absolute left-0 top-[80px] w-[7px] font-['Open_Sans'] text-[10px] leading-[12px] text-white">
        <div className="ml-[5px] mt-px h-px w-[2px] bg-white" />
        <div className="mt-[174px] pl-[1px]">v</div>
        <div className="mt-[84px] pl-[3px]">\</div>
      </div>
      <AppWindow />
      <Taskbar />
    </div>
  );
}
